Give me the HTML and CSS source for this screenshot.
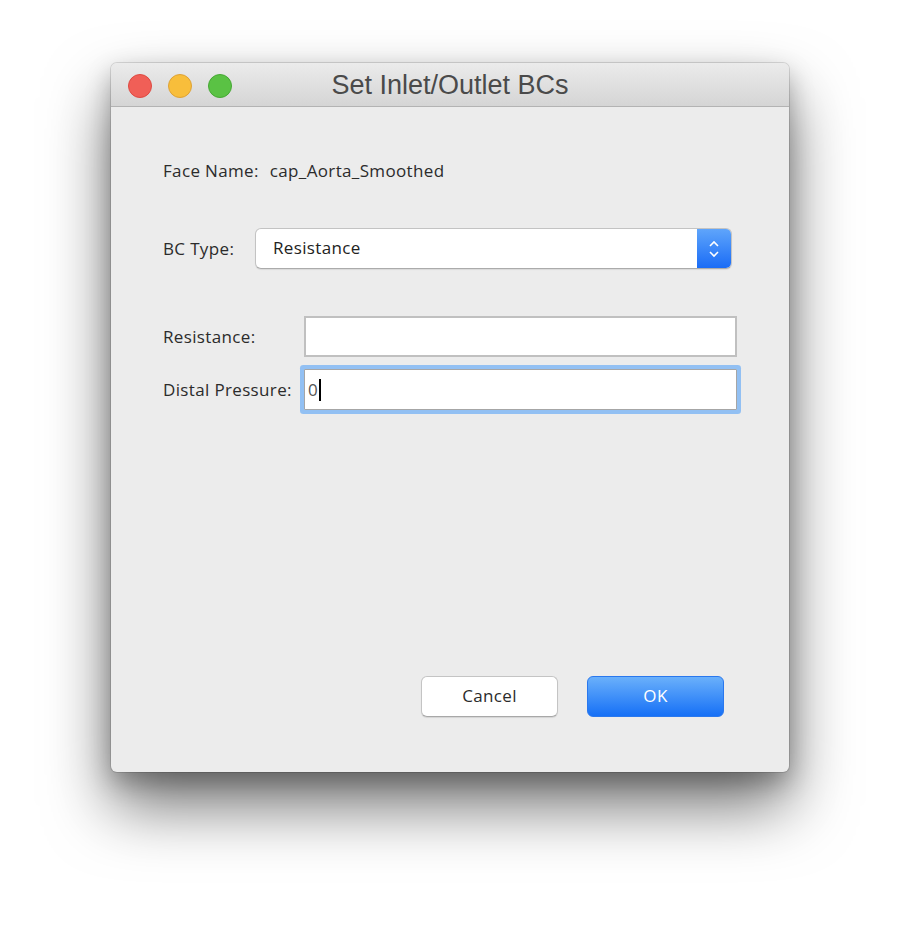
FILE: index.html
```html
<!DOCTYPE html>
<html>
<head>
<meta charset="utf-8">
<link rel="stylesheet" href="styles.css">
</head>
<body>
<div class="window">
  <div class="titlebar">
    <div class="lights">
      <span class="light red"></span>
      <span class="light yellow"></span>
      <span class="light green"></span>
    </div>
    <div class="title">Set Inlet/Outlet BCs</div>
  </div>
  <div class="content">
    <div class="face-row">
      <span class="label">Face Name:</span>
      <span class="face-value">cap_Aorta_Smoothed</span>
    </div>
    <div class="bc-row">
      <span class="label bc-label">BC Type:</span>
      <div class="combo">
        <span class="combo-text">Resistance</span>
        <span class="stepper">
          <svg width="14" height="22" viewBox="0 0 14 22">
            <path d="M3 8 L7 4 L11 8" fill="none" stroke="#fff" stroke-width="1.6"/>
            <path d="M3 14 L7 18 L11 14" fill="none" stroke="#fff" stroke-width="1.6"/>
          </svg>
        </span>
      </div>
    </div>
    <div class="field-row res-row">
      <span class="label field-label">Resistance:</span>
      <div class="input"></div>
    </div>
    <div class="field-row dist-row">
      <span class="label field-label">Distal Pressure:</span>
      <div class="input focused"><span class="value">0</span><span class="caret"></span></div>
    </div>
    <div class="buttons">
      <div class="btn cancel">Cancel</div>
      <div class="btn ok">OK</div>
    </div>
  </div>
</div>
</body>
</html>
```

FILE: styles.css
```css
html, body {
  margin: 0;
  padding: 0;
  background: #ffffff;
}
body {
  width: 900px;
  height: 932px;
  overflow: hidden;
  padding-top: 63px;
  box-sizing: border-box;
}
.window {
  margin-left: 111px;
  width: 678px;
  height: 709px;
  background: #ececec;
  border-radius: 6px;
  box-shadow: 0 0 0 1px rgba(0,0,0,0.12), 0 34px 64px rgba(0,0,0,0.55), 0 10px 24px rgba(0,0,0,0.25);
  overflow: hidden;
  font-family: "Open Sans", "Noto Sans", sans-serif;
  color: #222;
}
.titlebar {
  height: 43px;
  border-bottom: 1px solid #b3b3b3;
  background: linear-gradient(#ebebeb, #d5d5d5);
  display: flex;
  align-items: center;
  position: relative;
}
.lights {
  display: flex;
  gap: 16px;
  padding-left: 17px;
  padding-top: 2px;
}
.light {
  width: 24px;
  height: 24px;
  border-radius: 50%;
  box-sizing: border-box;
}
.red { background: #f05f57; border: 1px solid #de4a42; }
.yellow { background: #f8be3b; border: 1px solid #dea236; }
.green { background: #5ac244; border: 1px solid #46a834; }
.title {
  position: absolute;
  left: 0;
  right: 0;
  text-align: center;
  font-family: "Liberation Sans", Arial, sans-serif;
  font-size: 27px;
  color: #4a4a4a;
  top: 7px;
}
.content {
  padding: 53px 52px 0 52px;
  font-size: 17px;
  letter-spacing: 0.35px;
}
.label {
  color: #2b2b2b;
  line-height: 22px;
}
.face-row {
  display: flex;
  gap: 11px;
  height: 22px;
  line-height: 22px;
}
.face-value { color: #2b2b2b; }
.bc-row {
  display: flex;
  align-items: center;
  margin-top: 46px;
  padding-right: 5px;
}
.bc-label {
  width: 92px;
  flex: none;
}
.combo {
  flex: 1;
  height: 41px;
  box-sizing: border-box;
  background: #fff;
  border: 1px solid #c3c3c3;
  border-bottom-color: #ababab;
  border-radius: 6px;
  display: flex;
  align-items: center;
  overflow: hidden;
  box-shadow: 0 1px 1px rgba(0,0,0,0.08);
}
.combo-text {
  flex: 1;
  padding-left: 17px;
  margin-top: -3px;
}
.stepper {
  width: 34px;
  height: 100%;
  background: linear-gradient(#5fa5fb, #1a6cf6);
  display: flex;
  align-items: center;
  justify-content: center;
}
.field-row {
  display: flex;
  align-items: center;
}
.res-row { margin-top: 47px; }
.dist-row { margin-top: 12px; }
.field-label {
  width: 141px;
  flex: none;
}
.input {
  width: 433px;
  height: 41px;
  box-sizing: border-box;
  background: #fff;
  border: 2px solid #c0c0c0;
  display: flex;
  align-items: center;
}
.input.focused {
  height: 41px;
  border: 1px solid #a6a6a6;
  box-shadow: 0 0 0 4px #92c0f3;
  border-radius: 1px;
}
.value {
  padding-left: 3px;
  color: #555;
}
.caret {
  width: 2px;
  height: 22px;
  background: #000;
  margin-left: 1px;
}
.buttons {
  display: flex;
  justify-content: flex-end;
  gap: 29px;
  margin-top: 266px;
  padding-right: 13px;
}
.btn {
  width: 137px;
  height: 41px;
  box-sizing: border-box;
  border-radius: 6px;
  display: flex;
  align-items: center;
  justify-content: center;
  font-size: 17px;
  padding-bottom: 2px;
}
.cancel {
  background: #fff;
  border: 1px solid #c4c4c4;
  border-bottom-color: #a8a8a8;
  color: #2b2b2b;
  box-shadow: 0 1px 1px rgba(0,0,0,0.1);
}
.ok {
  background: linear-gradient(#6ab0fb, #1670f6);
  border: 1px solid #2a78ee;
  color: #fff;
}
```
